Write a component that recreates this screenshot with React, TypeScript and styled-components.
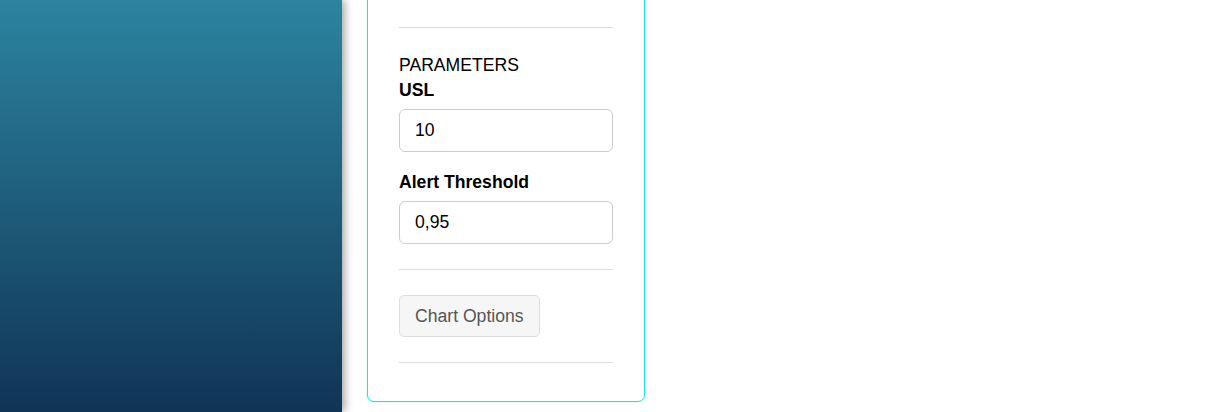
import styled, {createGlobalStyle} from "styled-components";

const GlobalStyle = createGlobalStyle`
    html, body {
        margin: 0;
        padding: 0;
        background: #ffffff;
        font-family: "Liberation Sans", Arial, sans-serif;
        overflow: hidden;
    }
`

export default function App() {
    return (
        <Page>
            <GlobalStyle/>
            <Sidebar/>
            <Main>
                <Panel>
                    <Divider/>
                    <SectionTitle>PARAMETERS</SectionTitle>
                    <Field>
                        <FieldLabel>USL</FieldLabel>
                        <TextInput defaultValue="10"/>
                    </Field>
                    <Field $spaced>
                        <FieldLabel>Alert Threshold</FieldLabel>
                        <TextInput defaultValue="0,95"/>
                    </Field>
                    <Divider $gap={25}/>
                    <OptionsButton>Chart Options</OptionsButton>
                    <Divider $gap={25}/>
                </Panel>
            </Main>
        </Page>
    );
}

const Page = styled.div`
    display: flex;
    height: 412px;
    width: 1229px;
`

const Sidebar = styled.aside`
    flex: 0 0 342px;
    height: 100%;
    background: linear-gradient(to bottom, #2c84a0 0%, #103456 100%);
    box-shadow: 3px 0 8px rgba(0, 0, 0, 0.35);
    position: relative;
    z-index: 1;
`

const Main = styled.main`
    flex: 1;
    padding-left: 25px;
    overflow: hidden;
`

const Panel = styled.section`
    width: 214px;
    margin-top: -41px;
    padding: 67px 31px 38px 31px;
    border: 1px solid #0af0d2;
    box-shadow: 0 0 1px #0af0d2;
    border-radius: 7px;
    display: flex;
    flex-direction: column;
    align-items: flex-start;
`

const Divider = styled.hr<{ $gap?: number }>`
    align-self: stretch;
    margin: ${p => p.$gap ?? 0}px 0 0 0;
    border: 0;
    border-top: 1px solid #dcdcdc;
    height: 0;
`

const SectionTitle = styled.div`
    margin-top: 27px;
    font-size: 17.6px;
    line-height: 20px;
    color: #000;
`

const Field = styled.div<{ $spaced?: boolean }>`
    align-self: stretch;
    display: flex;
    flex-direction: column;
    margin-top: ${p => p.$spaced ? 20 : 5}px;
`

const FieldLabel = styled.label`
    font-size: 17.6px;
    font-weight: bold;
    line-height: 20px;
    color: #000;
    margin-bottom: 9px;
`

const TextInput = styled.input`
    box-sizing: border-box;
    width: 100%;
    height: 43px;
    padding: 0 15px;
    border: 1px solid #cccccc;
    border-radius: 6px;
    font-family: "Liberation Sans", Arial, sans-serif;
    font-size: 17.6px;
    color: #000;
    outline: none;
`

const OptionsButton = styled.button`
    margin-top: 25px;
    height: 42px;
    padding: 0 15px;
    background: #f6f6f6;
    border: 1px solid #dddddd;
    border-radius: 5px;
    font-family: "Liberation Sans", Arial, sans-serif;
    font-size: 17.6px;
    color: #555;
`
